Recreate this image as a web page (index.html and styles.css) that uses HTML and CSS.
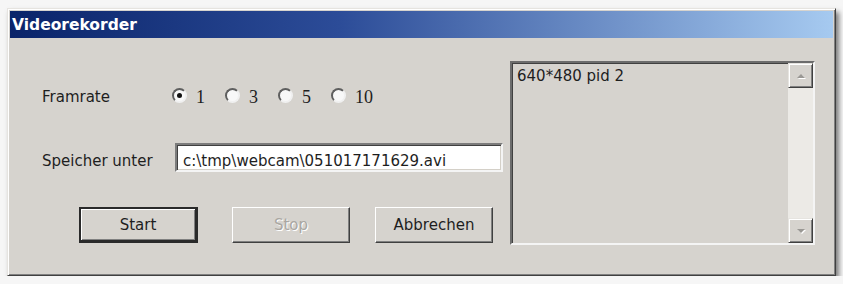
FILE: index.html
```html
<!DOCTYPE html>
<html lang="de">
  <head>
    <meta charset="UTF-8" />
    <meta name="viewport" content="width=device-width, initial-scale=1.0" />
    <title>Videorekorder</title>
    <link rel="stylesheet" href="styles.css">
  </head>
  <body>
    <div class="window">
      <div class="titlebar">Videorekorder</div>
      <div class="client">
        <div class="form">
          <div class="row rate-row">
            <span class="label rate-label">Framrate</span>
            <div class="options">
              <label class="opt"><span class="radio checked"></span>1</label>
              <label class="opt"><span class="radio"></span>3</label>
              <label class="opt"><span class="radio"></span>5</label>
              <label class="opt"><span class="radio"></span>10</label>
            </div>
          </div>
          <div class="row path-row">
            <span class="label path-label">Speicher unter</span>
            <input class="textbox" type="text" value="c:\tmp\webcam\051017171629.avi" />
          </div>
          <div class="buttons">
            <button class="btn btn-default">Start</button>
            <button class="btn btn-stop" disabled>Stop</button>
            <button class="btn btn-cancel">Abbrechen</button>
          </div>
        </div>
        <div class="listbox">
          <div class="items">
            <div class="item">640*480 pid 2</div>
          </div>
          <div class="scrollbar">
            <div class="sb-btn up"></div>
            <div class="sb-track"></div>
            <div class="sb-btn down"></div>
          </div>
        </div>
      </div>
    </div>
  </body>
</html>
```

FILE: styles.css
```css
* {
  box-sizing: border-box;
}
body {
  margin: 0;
  background: #f6f6f6;
  font-family: 'DejaVu Sans', sans-serif;
  font-size: 15px;
  color: #1e1e1e;
}
/* window frame */
.window {
  display: flex;
  flex-direction: column;
  width: 829px;
  height: 268px;
  margin: 8px 0 0 7px;
  padding: 2px;
  background: #d6d3ce;
  border: 1px solid;
  border-color: #e6e4e0 #404040 #404040 #e6e4e0;
  box-shadow: inset 1px 1px #fff, inset -1px -1px #808080,
    3px 4px 5px rgba(0, 0, 0, 0.5);
}
.titlebar {
  height: 27px;
  line-height: 28px;
  padding-left: 2px;
  color: #fff;
  font-weight: bold;
  font-size: 15.5px;
  background: linear-gradient(to right, #0a246a, #2c4c98 40%, #a6caf0);
}
.client {
  display: flex;
  flex: 1;
}
/* left side */
.form {
  width: 500px;
  padding: 44px 0 0 32px;
}
.row {
  display: flex;
}
.rate-row {
  height: 30px;
  align-items: center;
}
.rate-label {
  width: 130px;
}
.options {
  display: flex;
  align-items: center;
  gap: 20px;
}
.opt {
  display: flex;
  align-items: center;
  font-family: 'Liberation Serif', serif;
  font-size: 18px;
}
.radio {
  display: flex;
  align-items: center;
  justify-content: center;
  width: 15px;
  height: 15px;
  margin: -4px 9px 0 0;
  border-radius: 50%;
  border: 2px solid;
  border-color: #5e5e5e #f0f0f0 #f0f0f0 #5e5e5e;
  background: #f8f8f8;
}
.radio.checked::after {
  content: '';
  width: 5px;
  height: 5px;
  border-radius: 50%;
  background: #111;
}
.path-row {
  height: 29px;
  margin-top: 31px;
  align-items: baseline;
}
.path-label {
  width: 133px;
}
.textbox {
  width: 328px;
  height: 29px;
  padding: 6px 6px 0 6px;
  font-family: 'DejaVu Sans', sans-serif;
  font-size: 15px;
  color: #1e1e1e;
  background: #fff;
  outline: none;
  border: 2px solid;
  border-color: #7c7c7c #f4f4f4 #f4f4f4 #7c7c7c;
  box-shadow: inset 1px 1px #404040, inset -1px -1px #d4d0c8;
}
.buttons {
  display: flex;
  margin-top: 35px;
  padding-left: 37px;
}
.btn {
  width: 118px;
  height: 36px;
  padding: 0;
  font-family: 'DejaVu Sans', sans-serif;
  font-size: 15px;
  color: #1e1e1e;
  background: #d6d3ce;
  border: 1px solid;
  border-color: #fff #404040 #404040 #fff;
  box-shadow: inset -1px -1px #808080;
}
.btn-default {
  width: 119px;
  border: 2px solid #2a2a2a;
  border-width: 2px 3px 3px 2px;
  box-shadow: inset 1px 1px #fff, inset -1px -1px #808080;
}
.btn-stop {
  margin-left: 34px;
  color: #aaa7a2;
  text-shadow: 1px 1px #fff;
}
.btn-cancel {
  margin-left: 25px;
}
/* list */
.listbox {
  display: flex;
  width: 305px;
  height: 184px;
  margin-top: 23px;
  border: 2px solid;
  border-color: #6c6c6c #f4f4f4 #f4f4f4 #6c6c6c;
  box-shadow: inset 1px 1px #404040;
}
.items {
  flex: 1;
  padding: 4px 5px;
  line-height: 18px;
}
.scrollbar {
  display: flex;
  flex-direction: column;
  width: 25px;
}
.sb-btn {
  display: flex;
  align-items: center;
  justify-content: center;
  height: 25px;
  background: #d6d3ce;
  border: 1px solid;
  border-color: #e6e4e0 #404040 #404040 #e6e4e0;
  box-shadow: inset 1px 1px #fff, inset -1px -1px #808080;
}
.sb-btn::before {
  content: '';
  border-left: 4px solid transparent;
  border-right: 4px solid transparent;
  filter: drop-shadow(1px 1px 0 #fff);
}
.sb-btn.up::before {
  border-bottom: 4px solid #9a9894;
}
.sb-btn.down::before {
  border-top: 4px solid #9a9894;
}
.sb-track {
  flex: 1;
  background: #eceae6;
}
```
